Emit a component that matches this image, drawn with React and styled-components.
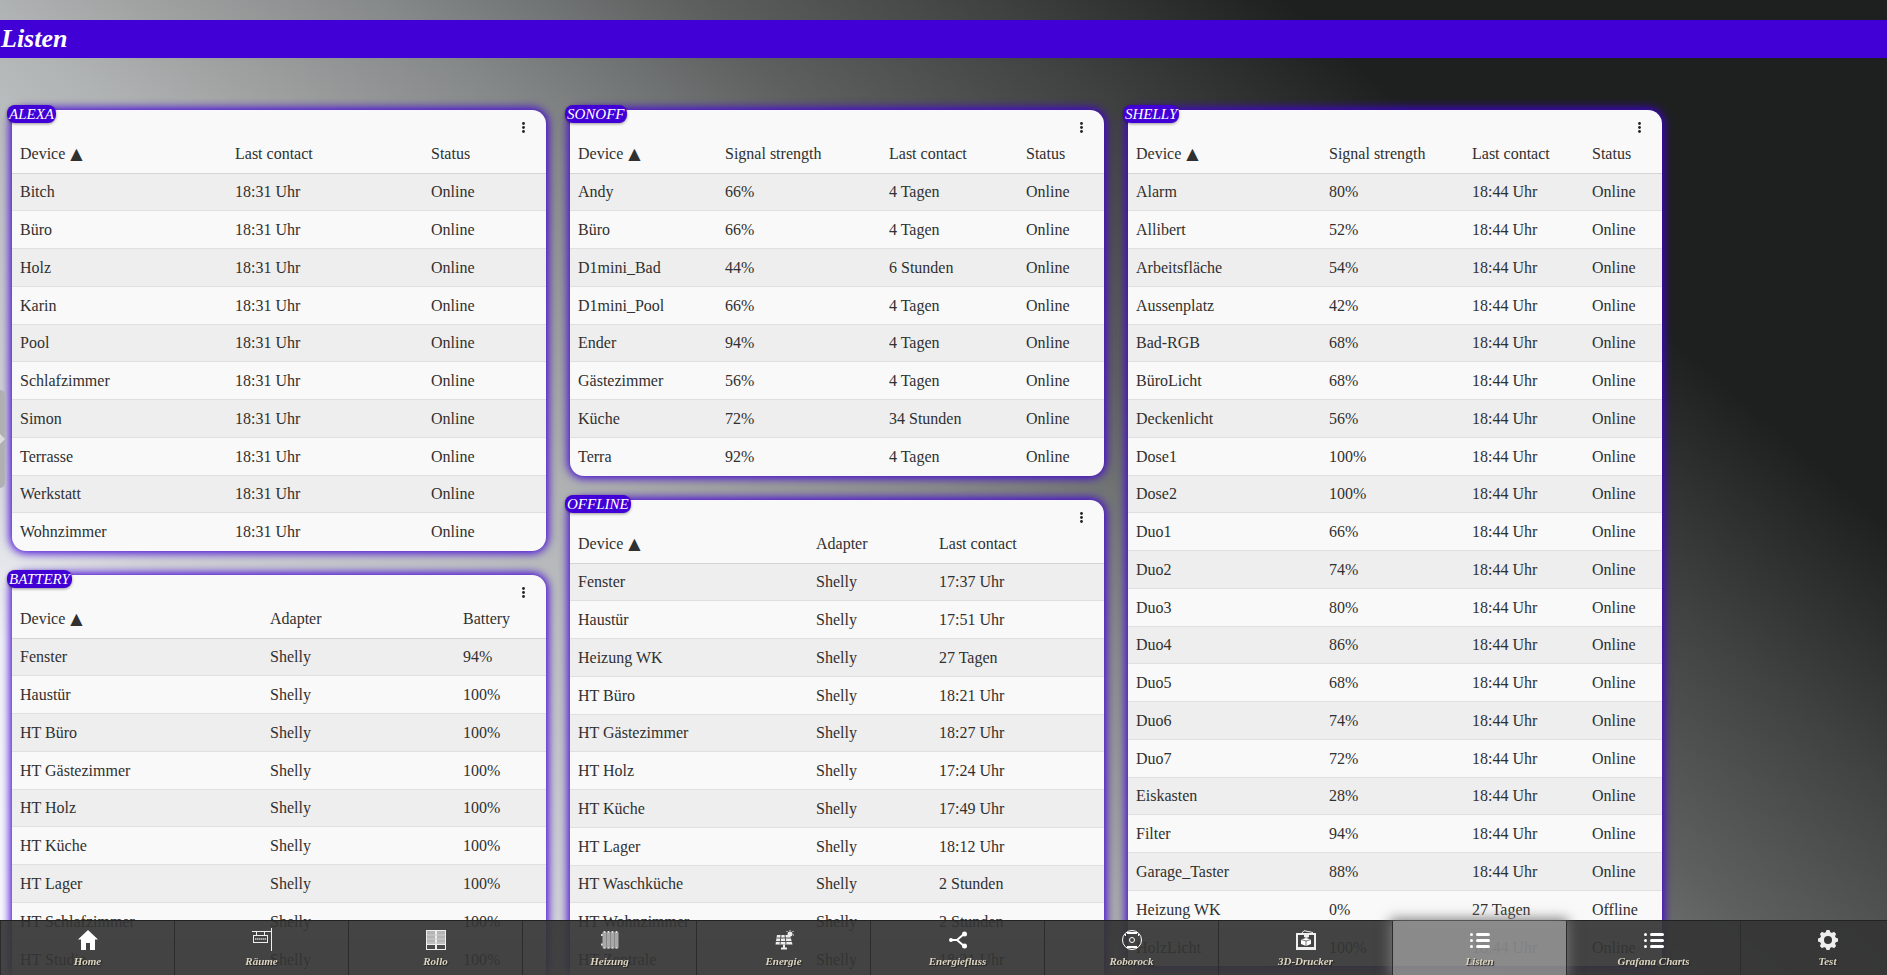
import React, { useState } from "react";
import styled, { createGlobalStyle } from "styled-components";

const alexa = {
  title: "Alexa",
  columns: ["Device", "Last contact", "Status"],
  widths: [215, 196, 123],
  rows: [
    "Bitch",
    "Büro",
    "Holz",
    "Karin",
    "Pool",
    "Schlafzimmer",
    "Simon",
    "Terrasse",
    "Werkstatt",
    "Wohnzimmer",
  ].map((name) => [name, "18:31 Uhr", "Online"]),
};

const battery = {
  title: "Battery",
  columns: ["Device", "Adapter", "Battery"],
  widths: [250, 193, 91],
  rows: [
    ["Fenster", "Shelly", "94%"],
    ["Haustür", "Shelly", "100%"],
    ["HT Büro", "Shelly", "100%"],
    ["HT Gästezimmer", "Shelly", "100%"],
    ["HT Holz", "Shelly", "100%"],
    ["HT Küche", "Shelly", "100%"],
    ["HT Lager", "Shelly", "100%"],
    ["HT Schlafzimmer", "Shelly", "100%"],
    ["HT Studio", "Shelly", "100%"],
  ],
};

const sonoff = {
  title: "Sonoff",
  columns: ["Device", "Signal strength", "Last contact", "Status"],
  widths: [147, 164, 137, 86],
  rows: [
    ["Andy", "66%", "4 Tagen", "Online"],
    ["Büro", "66%", "4 Tagen", "Online"],
    ["D1mini_Bad", "44%", "6 Stunden", "Online"],
    ["D1mini_Pool", "66%", "4 Tagen", "Online"],
    ["Ender", "94%", "4 Tagen", "Online"],
    ["Gästezimmer", "56%", "4 Tagen", "Online"],
    ["Küche", "72%", "34 Stunden", "Online"],
    ["Terra", "92%", "4 Tagen", "Online"],
  ],
};

const offline = {
  title: "Offline",
  columns: ["Device", "Adapter", "Last contact"],
  widths: [238, 123, 173],
  rows: [
    ["Fenster", "Shelly", "17:37 Uhr"],
    ["Haustür", "Shelly", "17:51 Uhr"],
    ["Heizung WK", "Shelly", "27 Tagen"],
    ["HT Büro", "Shelly", "18:21 Uhr"],
    ["HT Gästezimmer", "Shelly", "18:27 Uhr"],
    ["HT Holz", "Shelly", "17:24 Uhr"],
    ["HT Küche", "Shelly", "17:49 Uhr"],
    ["HT Lager", "Shelly", "18:12 Uhr"],
    ["HT Waschküche", "Shelly", "2 Stunden"],
    ["HT Wohnzimmer", "Shelly", "2 Stunden"],
    ["HT Zentrale", "Shelly", "18:21 Uhr"],
  ],
};

const shelly = {
  title: "Shelly",
  columns: ["Device", "Signal strength", "Last contact", "Status"],
  widths: [193, 143, 120, 78],
  rows: [
    ["Alarm", "80%", "18:44 Uhr", "Online"],
    ["Allibert", "52%", "18:44 Uhr", "Online"],
    ["Arbeitsfläche", "54%", "18:44 Uhr", "Online"],
    ["Aussenplatz", "42%", "18:44 Uhr", "Online"],
    ["Bad-RGB", "68%", "18:44 Uhr", "Online"],
    ["BüroLicht", "68%", "18:44 Uhr", "Online"],
    ["Deckenlicht", "56%", "18:44 Uhr", "Online"],
    ["Dose1", "100%", "18:44 Uhr", "Online"],
    ["Dose2", "100%", "18:44 Uhr", "Online"],
    ["Duo1", "66%", "18:44 Uhr", "Online"],
    ["Duo2", "74%", "18:44 Uhr", "Online"],
    ["Duo3", "80%", "18:44 Uhr", "Online"],
    ["Duo4", "86%", "18:44 Uhr", "Online"],
    ["Duo5", "68%", "18:44 Uhr", "Online"],
    ["Duo6", "74%", "18:44 Uhr", "Online"],
    ["Duo7", "72%", "18:44 Uhr", "Online"],
    ["Eiskasten", "28%", "18:44 Uhr", "Online"],
    ["Filter", "94%", "18:44 Uhr", "Online"],
    ["Garage_Taster", "88%", "18:44 Uhr", "Online"],
    ["Heizung WK", "0%", "27 Tagen", "Offline"],
    ["HolzLicht", "100%", "18:44 Uhr", "Online"],
  ],
};

const board = [[alexa, battery], [sonoff, offline], [shelly]];

const HomeIcon = () => (
  <Icon>
    <path d="M10 0L0 9.5h3V20h5v-7h4v7h5V9.5h3z" fill="#fff" />
  </Icon>
);

const SignIcon = () => (
  <Icon>
    <g fill="none" stroke="#eee">
      <path d="M0 1.5H20M19.500-2V21M4.500 1.500V5M12.500 1.500V5" />
      <rect x="1.5" y="5.500" width="14" height="7" />
      <path d="M3 9H14" stroke="#aaa" strokeWidth="2" strokeDasharray="1.500 .5" />
    </g>
  </Icon>
);

const BlindsIcon = () => (
  <Icon>
    <path d="M0 0H20V20H0z" fill="#eee" />
    <path d="M1 1H9V14H1zM11 1H19V14H11z" fill="#b4b4b4" />
    <path d="M1 5H19M1 9H19M1 13H19" stroke="#ccc" />
    <path d="M1 15H9V19H1zM11 15H19V19H11z" fill="#4a4a4a" />
  </Icon>
);

const RadiatorIcon = () => (
  <Icon>
    <path d="M1 5H17M1 14.500H17" stroke="#ddd" strokeWidth="2" />
    <path
      d="M4.500 3V17M8.500 3V17M12.500 3V17M16.500 3V17"
      stroke="#a8a8a8"
      strokeWidth="4"
      strokeLinecap="round"
    />
    <path d="M6.500 3V17M10.500 3V17M14.500 3V17" stroke="#888" />
    <path
      d="M4.500 1V3M8.500 1V3M12.500 1V3M16.500 1V3M4.500 17V18M8.500 17V18M12.500 17V18M16.500 17V18"
      stroke="#ddd"
    />
  </Icon>
);

const SolarIcon = () => (
  <Icon>
    <path d="M3 5H16L18.500 14.500H1.500z" fill="#eee" />
    <path
      d="M2.500 8H17.500M2 11.500H18M7 5L6 14.500M11 5L12 14.500"
      stroke="#555"
      fill="none"
    />
    <g stroke="#eee" fill="none">
      <path d="M10 14.500V18.500M7 18.500H13" strokeWidth="2" />
      <path d="M16 0V1M19 5H20M12.500 1L13.500 2M19.500 1L18.500 2" />
    </g>
    <circle cx="16" cy="4" r="2.500" fill="#eee" />
  </Icon>
);

const FlowIcon = () => (
  <Icon>
    <path d="M3 10H9L16 4M9 10L16 16" stroke="#fff" strokeWidth="2" fill="none" />
    <circle cx="3" cy="10" r="2" fill="#fff" />
    <circle cx="16.500" cy="4" r="2.500" fill="#fff" />
    <circle cx="16.500" cy="16" r="2.500" fill="#fff" />
  </Icon>
);

const VacuumIcon = () => (
  <Icon>
    <g fill="none" stroke="#fff">
      <circle cx="10" cy="10" r="9.500" />
      <path d="M5 3H15M5 17H15" strokeWidth="2" />
      <circle cx="10" cy="10" r="2.500" />
      <path d="M3.500 4V6M16.500 4V6" />
    </g>
  </Icon>
);

const PrinterIcon = () => (
  <Icon>
    <path d="M1 4H19V19H1z" fill="none" stroke="#eee" strokeWidth="2" />
    <path d="M6 3L8 .7L17 2.500" fill="none" stroke="#eee" />
    <path d="M8 4H13V7L10.500 8L8 7zM2 17H18V19H2z" fill="#eee" />
    <path d="M5 9.500L10 8L15 9.500V14L10 16L5 14z" fill="#fff" />
    <path d="M5 9.500L10 11L15 9.500M10 11V16" fill="none" stroke="#555" strokeWidth=".8" />
  </Icon>
);

const ListIcon = () => (
  <Icon>
    <path
      d="M7.500 4.500H18.500M7.500 10.500H18.500M7.500 16.500H18.500"
      stroke="#fff"
      strokeWidth="3"
      strokeLinecap="round"
    />
    <g fill="#fff">
      <circle cx="1.500" cy="4.500" r="1.500" />
      <circle cx="1.500" cy="10.500" r="1.500" />
      <circle cx="1.500" cy="16.500" r="1.500" />
    </g>
  </Icon>
);

const GearIcon = () => (
  <Icon>
    <circle cx="10" cy="10" r="6" fill="none" stroke="#eee" strokeWidth="4" />
    <g fill="#eee">
      {[0, 45, 90, 135, 180, 225, 270, 315].map((angle) => (
        <path
          key={angle}
          d="M7.500 3L8.500 0H11.500L12.500 3z"
          transform={`rotate(${angle} 10 10)`}
        />
      ))}
    </g>
  </Icon>
);

const views = [
  { name: "Home", icon: HomeIcon },
  { name: "Räume", icon: SignIcon },
  { name: "Rollo", icon: BlindsIcon },
  { name: "Heizung", icon: RadiatorIcon },
  { name: "Energie", icon: SolarIcon },
  { name: "Energiefluss", icon: FlowIcon },
  { name: "Roborock", icon: VacuumIcon },
  { name: "3D-Drucker", icon: PrinterIcon },
  { name: "Listen", icon: ListIcon },
  { name: "Grafana Charts", icon: ListIcon },
  { name: "Test", icon: GearIcon },
];

function DeviceCard({ list }) {
  return (
    <Card>
      <Badge>{list.title}</Badge>
      <Toolbar>
        <MenuButton aria-label={`${list.title} menu`}>
          <svg width="3" height="11" viewBox="0 0 3 11" fill="#222">
            <circle cx="1.5" cy="1.5" r="1.4" />
            <circle cx="1.5" cy="5.5" r="1.4" />
            <circle cx="1.5" cy="9.5" r="1.4" />
          </svg>
        </MenuButton>
      </Toolbar>
      <Table>
        <colgroup>
          {list.widths.map((width, i) => (
            <Col key={i} $width={width} />
          ))}
        </colgroup>
        <thead>
          <tr>
            {list.columns.map((column, i) => (
              <HeadCell key={column}>
                {column}
                {i === 0 && <SortMark>▲</SortMark>}
              </HeadCell>
            ))}
          </tr>
        </thead>
        <tbody>
          {list.rows.map((row) => (
            <Row key={row[0]}>
              {row.map((value, i) => (
                <Cell key={i}>{value}</Cell>
              ))}
            </Row>
          ))}
        </tbody>
      </Table>
    </Card>
  );
}

export default function App() {
  const [active, setActive] = useState("Listen");
  return (
    <>
      <GlobalStyle />
      <Page>
        <Header>
          <h1>Listen</h1>
        </Header>
        <Board>
          {board.map((lists, i) => (
            <Column key={i}>
              {lists.map((list) => (
                <DeviceCard key={list.title} list={list} />
              ))}
            </Column>
          ))}
        </Board>
      </Page>
      <DrawerHandle aria-label="Open drawer">
        <svg width="5" height="12" viewBox="0 0 5 12">
          <path d="M0 1L5 6L0 11z" fill="#ddd" />
        </svg>
      </DrawerHandle>
      <Nav>
        {views.map(({ name, icon: ViewIcon }) => (
          <NavButton
            key={name}
            $active={name === active}
            onClick={() => setActive(name)}
          >
            <ViewIcon />
            {name}
          </NavButton>
        ))}
      </Nav>
    </>
  );
}

const GlobalStyle = createGlobalStyle`
  * {
    box-sizing: border-box;
  }
  body {
    margin: 0;
    overflow: hidden;
    color: #303030;
    font-family: "Liberation Serif", "Times New Roman", serif;
    font-size: 16px;
  }
  button {
    font-family: inherit;
    cursor: pointer;
  }
`;

const Page = styled.div`
  height: 100vh;
  padding-top: 20px;
  overflow: hidden;
  background: linear-gradient(
    41deg,
    #fafaff 0%,
    #f0f2f6 13%,
    #d0d1d6 21%,
    #bcbfc0 32%,
    #b0b3b3 37%,
    #a0a2a2 42%,
    #868989 50%,
    #6e7171 56%,
    #5e5f5f 60%,
    #404141 70%,
    #1e201f 80%
  );
`;

const Header = styled.header`
  display: flex;
  align-items: center;
  height: 38px;
  padding-left: 1px;
  background: #4000d6;
  h1 {
    margin: 0;
    color: #fff;
    font-size: 26px;
    font-style: italic;
    line-height: 38px;
  }
`;

const Board = styled.main`
  display: grid;
  grid-template-columns: repeat(3, minmax(0, 534px));
  gap: 24px;
  padding: 52px 12px 80px;
`;

const Column = styled.div`
  display: flex;
  flex-direction: column;
  gap: 24px;
`;

const Card = styled.section`
  position: relative;
  border-radius: 14px;
  background: #f9f9f9;
  box-shadow: 0 0 10px 2px #4000d6;
`;

const Badge = styled.h2`
  position: absolute;
  top: -5px;
  left: -5px;
  margin: 0;
  padding: 0 2px;
  border-radius: 8px;
  background: #4000d6;
  box-shadow: 0 1px 3px rgba(0, 0, 0, 0.4);
  color: #fff;
  font-size: 15px;
  font-style: italic;
  font-weight: 400;
  line-height: 18px;
  text-transform: uppercase;
`;

const Toolbar = styled.div`
  display: flex;
  justify-content: flex-end;
  height: 26px;
  padding: 7px 13px 0;
`;

const MenuButton = styled.button`
  display: flex;
  align-items: center;
  justify-content: center;
  width: 20px;
  height: 20px;
  padding: 0;
  border: none;
  background: none;
`;

const Table = styled.table`
  width: 100%;
  border-spacing: 0;
  table-layout: fixed;
`;

const Col = styled.col`
  width: ${({ $width }) => $width}px;
`;

const HeadCell = styled.th`
  height: 38px;
  padding: 0 8px 2px;
  border-bottom: 1px solid #d4d4d4;
  font-weight: 400;
  line-height: 18px;
  text-align: left;
  white-space: nowrap;
`;

const SortMark = styled.span`
  margin-left: 5px;
  font-family: "DejaVu Sans", sans-serif;
  font-size: 16px;
  line-height: 18px;
`;

const Cell = styled.td`
  height: 38px;
  padding: 0 8px;
  border-bottom: 1px solid #e0e0e0;
  white-space: nowrap;
`;

const Row = styled.tr`
  &:nth-child(odd) {
    background: #eee;
  }
  &:nth-child(4n + 1) ${Cell} {
    height: 37px;
  }
  &:last-child ${Cell} {
    border-bottom: none;
  }
`;

const DrawerHandle = styled.button`
  position: fixed;
  top: 40%;
  left: 0;
  display: flex;
  align-items: center;
  width: 5px;
  height: 98px;
  padding: 0;
  border: none;
  border-radius: 0 5px 5px 0;
  background: #b0b0b2;
`;

const Nav = styled.nav`
  position: fixed;
  right: 0;
  bottom: 0;
  left: 0;
  display: flex;
  height: 55px;
  border-top: 1px solid #222;
  background: rgba(52, 52, 52, 0.92);
`;

const NavButton = styled.button`
  display: flex;
  flex: 0 0 174px;
  flex-direction: column;
  align-items: center;
  gap: 4px;
  padding: 9px 0 0;
  border: none;
  border-left: 1px solid #2c2c2c;
  background: ${({ $active }) =>
    $active ? "rgba(255, 255, 255, 0.38)" : "transparent"};
  box-shadow: ${({ $active }) => ($active ? "0 0 12px 2px #777" : "none")};
  color: #dcd4c0;
  font-size: 11px;
  font-style: italic;
  font-weight: 700;
  line-height: 14px;
  text-shadow: 1px 1px 1px #222;
`;

const Icon = styled.svg.attrs({ viewBox: "0 0 20 20" })`
  width: 20px;
  height: 20px;
  overflow: visible;
`;
